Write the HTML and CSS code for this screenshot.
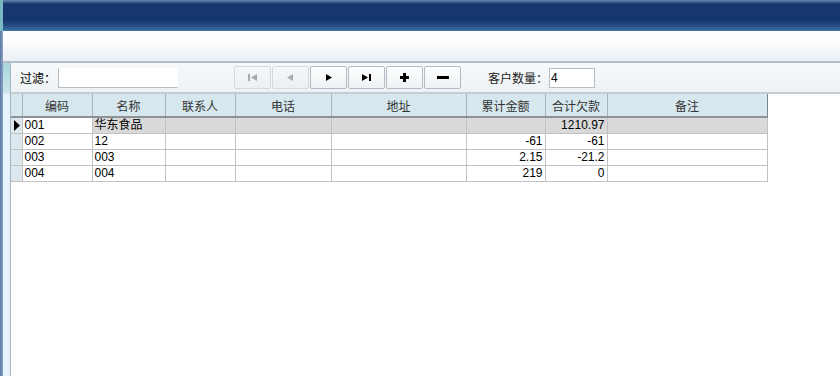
FILE: index.html
```html
<!DOCTYPE html>
<html>
<head>
<meta charset="utf-8">
<link rel="stylesheet" href="styles.css">
</head>
<body>
<div class="page">
  <div class="titlebar"></div>
  <div class="body">
    <div class="edge"></div>
    <div class="main">
      <div class="band"></div>
      <div class="sep"></div>
      <div class="inner">
        <div class="gutter"></div>
        <div class="content">
          <div class="toolbar">
            <span class="lbl filterlbl">过滤：</span>
            <div class="input filter"></div>
            <div class="nav">
              <div class="btn dis"><svg width="12" height="9" viewBox="0 0 12 9"><rect x="1" y="1" width="2" height="7" fill="#a9a9a9"/><path d="M10 1 L4 4.5 L10 8 Z" fill="#a9a9a9"/></svg></div>
              <div class="btn dis"><svg width="10" height="9" viewBox="0 0 10 9"><path d="M7 1 L1 4.5 L7 8 Z" fill="#a9a9a9"/></svg></div>
              <div class="btn"><svg width="10" height="9" viewBox="0 0 10 9"><path d="M2 1 L8 4.5 L2 8 Z" fill="#000"/></svg></div>
              <div class="btn"><svg width="12" height="9" viewBox="0 0 12 9"><path d="M1 1 L7 4.5 L1 8 Z" fill="#000"/><rect x="8" y="1" width="2" height="7" fill="#000"/></svg></div>
              <div class="btn"><svg width="11" height="11" viewBox="0 0 11 11"><rect x="4" y="1" width="3" height="9" fill="#000"/><rect x="1" y="4" width="9" height="3" fill="#000"/></svg></div>
              <div class="btn"><svg width="12" height="4" viewBox="0 0 12 4"><rect x="0" y="0" width="12" height="3" fill="#000"/></svg></div>
            </div>
            <span class="lbl count">客户数量：</span>
            <div class="input countbox">4</div>
          </div>
          <div class="tsep"></div>
          <div class="gridarea">
            <table class="grid">
              <colgroup>
                <col class="c0"><col class="c1"><col class="c2"><col class="c3"><col class="c4"><col class="c5"><col class="c6"><col class="c7"><col class="c8">
              </colgroup>
              <thead>
                <tr><th class="ind"></th><th>编码</th><th>名称</th><th>联系人</th><th>电话</th><th>地址</th><th>累计金额</th><th>合计欠款</th><th>备注</th></tr>
              </thead>
              <tbody>
                <tr class="sel"><td class="ind"><svg width="7" height="11" viewBox="0 0 7 11"><path d="M1 0 L7 5.5 L1 11 Z" fill="#000"/></svg></td><td class="cur">001</td><td>华东食品</td><td></td><td></td><td></td><td class="num"></td><td class="num">1210.97</td><td></td></tr>
                <tr><td class="ind"></td><td>002</td><td>12</td><td></td><td></td><td></td><td class="num">-61</td><td class="num">-61</td><td></td></tr>
                <tr><td class="ind"></td><td>003</td><td>003</td><td></td><td></td><td></td><td class="num">2.15</td><td class="num">-21.2</td><td></td></tr>
                <tr><td class="ind"></td><td>004</td><td>004</td><td></td><td></td><td></td><td class="num">219</td><td class="num">0</td><td></td></tr>
              </tbody>
            </table>
          </div>
        </div>
      </div>
    </div>
  </div>
</div>
</body>
</html>
```
FILE: styles.css
```css
html, body {
  margin: 0;
  padding: 0;
  background: #fff;
}
.page {
  width: 840px;
  height: 376px;
  overflow: hidden;
  display: flex;
  flex-direction: column;
  font-family: "Liberation Sans", "Noto Sans CJK SC", sans-serif;
  font-size: 12px;
  color: #000;
}
.titlebar {
  height: 31px;
  flex: none;
  background: linear-gradient(to bottom, #6d87ad 0px, #3f5f8e 2px, #18376f 4px, #16366f 20px, #234a83 25px, #3a6a9c 30px, #4b7aab 31px);
  border-left: 3px solid #79b9c3;
  box-sizing: border-box;
}
.body {
  flex: 1;
  display: flex;
}
.edge {
  width: 3px;
  flex: none;
  background: linear-gradient(to right, #5c76a3, #8ca6c8);
}
.main {
  flex: 1;
  display: flex;
  flex-direction: column;
}
.band {
  height: 30px;
  flex: none;
  background: linear-gradient(to bottom, #ffffff, #fbfcfd 40%, #eaf0f4);
}
.sep {
  height: 2px;
  flex: none;
  background: #b3bec9;
}
.inner {
  flex: 1;
  display: flex;
}
.gutter {
  width: 7px;
  flex: none;
  background: linear-gradient(to bottom, #a8d6dc 0px, #cbe6ec 30px, #e7f3fb 31px, #e7f3fb 100%);
  border-right: 1px solid #a7b4c2;
}
.content {
  flex: 1;
  display: flex;
  flex-direction: column;
}
.toolbar {
  height: 29px;
  flex: none;
  display: flex;
  align-items: center;
  background: linear-gradient(to bottom, #f6f9fa, #edf2f5);
  padding-left: 9px;
  box-sizing: border-box;
}
.lbl {
  font-family: "Noto Sans CJK SC", sans-serif;
  font-size: 12px;
  color: #000;
  white-space: nowrap;
  flex: none;
}
.filterlbl {
  width: 38px;
}
.input {
  height: 20px;
  box-sizing: border-box;
  background: #fff;
  border: 1px solid #b5bcc3;
  font-size: 12px;
  line-height: 18px;
  padding-left: 1px;
  flex: none;
}
.filter {
  width: 120px;
  border-right-color: #fff;
  border-top-color: #fff;
}
.nav {
  display: flex;
  gap: 1px;
  margin-left: 56px;
}
.btn {
  width: 37px;
  height: 23px;
  box-sizing: border-box;
  border: 1px solid #b3bcc4;
  border-radius: 2px;
  background: linear-gradient(to bottom, #fdfefe, #eef2f5);
  display: flex;
  align-items: center;
  justify-content: center;
}
.btn.dis {
  border-color: #d3dade;
  background: linear-gradient(to bottom, #f4f7f9, #eaf0f3);
}
.count {
  margin-left: 27px;
  margin-right: 1px;
  color: #222;
}
.countbox {
  width: 46px;
}
.tsep {
  height: 2px;
  flex: none;
  background: #c5cdd4;
}
.gridarea {
  flex: 1;
  background: #fff;
}
.grid {
  border-collapse: collapse;
  table-layout: fixed;
  width: 756px;
}
.c0 { width: 11px; }
.c1 { width: 70px; }
.c2 { width: 73px; }
.c3 { width: 70px; }
.c4 { width: 96px; }
.c5 { width: 135px; }
.c6 { width: 79px; }
.c7 { width: 62px; }
.c8 { width: 160px; }
.grid th {
  height: 22px;
  padding: 0;
  background: #d6e7ed;
  border-right: 1px solid #a9b2b7;
  border-bottom: 2px solid #8c9296;
  font-family: "Noto Sans CJK SC", sans-serif;
  font-weight: normal;
  font-size: 12px;
  color: #333;
  text-align: center;
}
.grid th:last-child {
  border-right: 1px solid #7d8387;
}
.grid td {
  height: 15px;
  padding: 0 2px;
  border: 1px solid #c2c2c2;
  font-size: 12px;
  line-height: 15px;
  white-space: nowrap;
  overflow: hidden;
  font-family: "Liberation Sans", "Noto Sans CJK SC", sans-serif;
}
.grid td:first-child, .grid th:first-child {
  border-left: none;
}
.grid td.ind {
  background: #dce7ee;
  padding: 0;
  text-align: center;
  vertical-align: middle;
}
.grid td.ind svg {
  display: block;
  margin: 0 auto;
}
.grid tr.sel td {
  background: #d9d9d9;
}
.grid tr.sel td.ind {
  background: #dce7ee;
}
.grid tr.sel td.cur {
  background: #fff;
}
.grid td.num {
  text-align: right;
}
```
